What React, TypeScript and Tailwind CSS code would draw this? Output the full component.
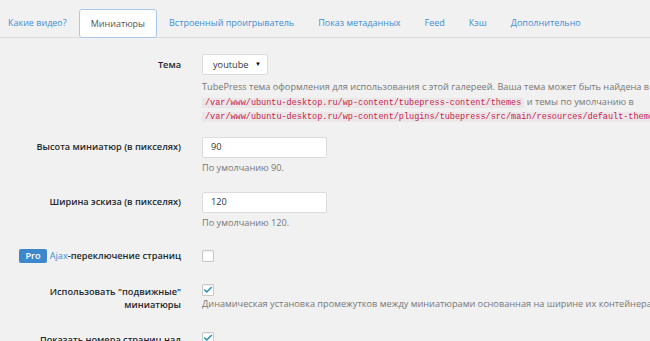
import { Check } from 'lucide-react';

const tabs = [
  'Какие видео?',
  'Миниатюры',
  'Встроенный проигрыватель',
  'Показ метаданных',
  'Feed',
  'Кэш',
  'Дополнительно',
];

function Checkbox({ checked }: { checked?: boolean }) {
  return (
    <div className="w-[12px] h-[12px] bg-white border border-[#c9c9c9] rounded-[1px] shadow-[inset_0_1px_2px_rgba(0,0,0,0.07)] flex items-center justify-center">
      {checked && <Check size={10} strokeWidth={3.5} className="text-[#1e8cbe]" />}
    </div>
  );
}

function Code({ children }: { children: string }) {
  return (
    <code className="font-['Liberation_Mono',monospace] text-[8.5px] leading-[10px] text-[#c7254e] bg-[#ebe6e8] px-[3px]">
      {children}
    </code>
  );
}

function Row({ label, className, children }: { label: React.ReactNode; className: string; children: React.ReactNode }) {
  return (
    <div className={`flex gap-[21px] ${className}`}>
      <div className="w-[181px] shrink-0 flex justify-end text-right font-semibold">{label}</div>
      <div className="flex-1 min-w-0">{children}</div>
    </div>
  );
}

export default function App() {
  return (
    <div className="w-[650px] h-[341px] overflow-hidden bg-[#f1f1f1] font-['Open_Sans',sans-serif] text-[9.2px] text-[#23282d]">
      {/* tab bar */}
      <div className="flex items-end h-[38px] border-b border-[#dcdcdc] ml-[-4px] whitespace-nowrap text-[9px]">
        {tabs.map((t, i) =>
          i === 1 ? (
            <div
              key={t}
              className="h-[29px] mb-[-1px] px-[11px] pt-[1px] flex items-center bg-white border border-[#a8c9ea] rounded-[3px] text-[#555]"
            >
              {t}
            </div>
          ) : (
            <div key={t} className="h-[29px] px-[11px] pt-[1px] flex items-center text-[#3f8fd6] border border-transparent">
              {t}
            </div>
          )
        )}
      </div>

      <Row className="mt-[16px]" label={<div className="h-[21px] flex items-center">Тема</div>}>
        <div className="w-[66px] h-[21px] bg-white border border-[#dcdcdc] rounded-[2px] flex items-center justify-between pl-[10px] pr-[6px] text-[#333]">
          <span>youtube</span>
          <span className="text-[6px] text-black">▼</span>
        </div>
        <div className="mt-[5px] leading-[14.5px] text-[#777] whitespace-nowrap">
          <div>TubePress тема оформления для использования с этой галереей. Ваша тема может быть найдена в</div>
          <div>
            <Code>/var/www/ubuntu-desktop.ru/wp-content/tubepress-content/themes</Code> и темы по умолчанию в
          </div>
          <div>
            <Code>/var/www/ubuntu-desktop.ru/wp-content/plugins/tubepress/src/main/resources/default-themes</Code>
          </div>
        </div>
      </Row>

      <Row className="mt-[13px]" label={<div className="h-[21px] flex items-center">Высота миниатюр (в пикселях)</div>}>
        <div className="w-[125px] h-[21px] bg-white border border-[#dcdcdc] rounded-[2px] flex items-center px-[8px] text-[#333]">90</div>
        <div className="mt-[3px] leading-[14px] text-[#777]">По умолчанию 90.</div>
      </Row>

      <Row className="mt-[17px]" label={<div className="h-[21px] flex items-center">Ширина эскиза (в пикселях)</div>}>
        <div className="w-[125px] h-[21px] bg-white border border-[#dcdcdc] rounded-[2px] flex items-center px-[8px] text-[#333]">120</div>
        <div className="mt-[3px] leading-[14px] text-[#777]">По умолчанию 120.</div>
      </Row>

      <Row
        className="mt-[19px]"
        label={
          <div className="h-[14px] flex items-center whitespace-nowrap">
            <span className="bg-[#3d88cd] text-white rounded-[2px] px-[6px] h-[14px] flex items-center mr-[3px]">Pro</span>
            <span className="text-[#3b8ad3] font-normal">Ajax</span>-переключение страниц
          </div>
        }
      >
        <div className="pt-[1px]">
          <Checkbox />
        </div>
      </Row>

      <Row
        className="mt-[21px]"
        label={
          <div className="leading-[13px] pt-[1px]">
            Использовать "подвижные"
            <br />
            миниатюры
          </div>
        }
      >
        <Checkbox checked />
        <div className="mt-[1px] leading-[14px] text-[#777] whitespace-nowrap">
          Динамическая установка промежутков между миниатюрами основанная на ширине их контейнера
        </div>
      </Row>

      <Row className="mt-[21px]" label={<div className="leading-[13px] pt-[1px]">Показать номера страниц над</div>}>
        <Checkbox checked />
      </Row>
    </div>
  );
}
